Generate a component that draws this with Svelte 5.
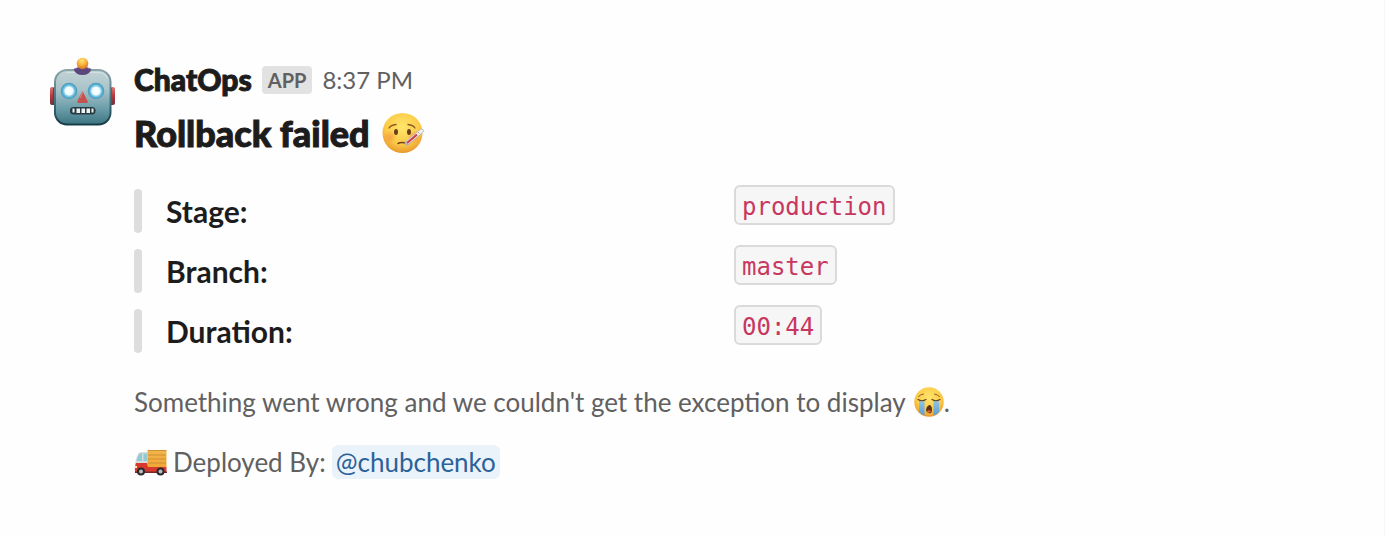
<script>
  const fields = [
    { label: 'Stage:', value: 'production' },
    { label: 'Branch:', value: 'master' },
    { label: 'Duration:', value: '00:44' }
  ];
</script>

<article class="message">
  <svg class="avatar" viewBox="0 0 66 70" role="img" aria-label="ChatOps">
    <defs>
      <linearGradient id="head" x1="0" y1="0" x2="0" y2="1">
        <stop offset="0" stop-color="#c3d3d5" />
        <stop offset=".35" stop-color="#a9c4ca" />
        <stop offset=".7" stop-color="#6c9eaa" />
        <stop offset="1" stop-color="#3d7482" />
      </linearGradient>
      <linearGradient id="rim" x1="0" y1="0" x2="0" y2="1">
        <stop offset="0" stop-color="#8ba5a9" />
        <stop offset=".6" stop-color="#3f6e79" />
        <stop offset="1" stop-color="#163c46" />
      </linearGradient>
      <linearGradient id="ear" x1="0" y1="0" x2="0" y2="1">
        <stop offset="0" stop-color="#db7770" />
        <stop offset=".5" stop-color="#b83840" />
        <stop offset="1" stop-color="#67333b" />
      </linearGradient>
      <radialGradient id="bulb" cx=".45" cy=".25" r=".8">
        <stop offset="0" stop-color="#ffe477" />
        <stop offset=".5" stop-color="#f7af38" />
        <stop offset="1" stop-color="#c96521" />
      </radialGradient>
      <radialGradient id="eye">
        <stop offset="0" stop-color="#fff" />
        <stop offset=".48" stop-color="#edfbff" />
        <stop offset=".62" stop-color="#8fcee5" />
        <stop offset=".82" stop-color="#4caed1" />
        <stop offset="1" stop-color="#5293ac" />
      </radialGradient>
    </defs>
    <rect x="1" y="30" width="8" height="18" rx="2" fill="url(#ear)" />
    <rect x="58" y="30" width="8" height="18" rx="2" fill="url(#ear)" />
    <rect x="4" y="31" width="3" height="16" fill="#70373f" />
    <rect x="60" y="31" width="3" height="16" fill="#70373f" />
    <rect x="6" y="13" width="55.500" height="54.500" rx="12" fill="url(#head)" stroke="url(#rim)" stroke-width="2" />
    <path d="M17 15.500h33q7 0 8 6" fill="none" stroke="#dce8e9" stroke-width="1.2" opacity=".7" />
    <path d="M24.500 12q9-4 18 0-2 6-9 6t-9-6z" fill="#5a477c" />
    <path d="M25.500 12q8-4 16 0" fill="none" stroke="#8b6fa6" />
    <circle cx="33.500" cy="6.500" r="5.800" fill="url(#bulb)" />
    <circle cx="20" cy="34" r="8.300" fill="url(#eye)" />
    <circle cx="47" cy="34" r="8.300" fill="url(#eye)" />
    <path d="M33.500 34l5 10q1 2-1 2h-8q-2 0-1-2z" fill="#c5524e" />
    <path d="M33.500 35l-2 6" stroke="#e28379" />
    <rect x="21" y="50" width="25.500" height="7.500" rx="3.500" fill="#263b42" />
    <path d="M23.500 51.500h2v4h-2zM27.500 51.500h3.500v4.500h-3.500zM32.500 51.500h3.500v4.500h-3.500zM37.500 51.500h3.500v4.500h-3.500zM42.500 51.500h2v4h-2z" fill="#edf3f3" />
  </svg>

  <div class="body">
    <header class="meta">
      <span class="name">ChatOps</span>
      <span class="badge">APP</span>
      <time>8:37 PM</time>
    </header>

    <h1>
      Rollback failed
      <svg class="sick" viewBox="0 0 42 42" role="img" aria-label="face with thermometer">
        <defs>
          <radialGradient id="face" cx=".5" cy=".35" r=".65">
            <stop offset="0" stop-color="#ffe56c" />
            <stop offset=".65" stop-color="#fccb48" />
            <stop offset="1" stop-color="#ea982e" />
          </radialGradient>
          <radialGradient id="flush">
            <stop offset="0" stop-color="#f37a3c" stop-opacity=".5" />
            <stop offset="1" stop-color="#f37a3c" stop-opacity="0" />
          </radialGradient>
        </defs>
        <circle cx="20.500" cy="21" r="20" fill="url(#face)" />
        <circle cx="8" cy="25" r="7" fill="url(#flush)" />
        <circle cx="32" cy="25" r="7" fill="url(#flush)" />
        <path d="M7 16q2-3 7-3.500M26 12.500q5 .5 7 3.500" fill="none" stroke="#8d5820" stroke-width="1.300" stroke-linecap="round" />
        <ellipse cx="14" cy="20" rx="2" ry="3" fill="#65401b" />
        <ellipse cx="27" cy="20" rx="2" ry="3" fill="#65401b" />
        <path d="M16 31.500q4-2 9 .5" fill="none" stroke="#70401c" stroke-width="1.500" stroke-linecap="round" />
        <path d="M25 31L39.500 19" stroke="#b3b0b3" stroke-width="4.600" stroke-linecap="round" />
        <path d="M26 30L39.500 19" stroke="#f4efef" stroke-width="3.400" stroke-linecap="round" />
        <path d="M25 31L35 22.500" stroke="#d73745" stroke-width="2.200" />
        <path d="M30 25l1.500 1.500M33 22.500l1.500 1.500M36 20l1.500 1.500" stroke="#74777c" stroke-width=".6" />
      </svg>
    </h1>

    <dl>
      {#each fields as field}
        <div class="field">
          <dt>{field.label}</dt>
          <dd><code>{field.value}</code></dd>
        </div>
      {/each}
    </dl>

    <p>
      Something went wrong and we couldn't get the exception to display
      <svg class="cry" viewBox="0 0 30 30" role="img" aria-label="loudly crying face">
        <defs>
          <linearGradient id="tear" x1="0" y1="0" x2="0" y2="1">
            <stop offset="0" stop-color="#8fc6e0" />
            <stop offset="1" stop-color="#5b9cd8" />
          </linearGradient>
        </defs>
        <circle cx="15" cy="15" r="14.700" fill="url(#face)" />
        <path d="M5 14h5.500v14.500q-3-1-5.500-3.500zM19.500 14H25v11q-2 2.500-5.500 3.500z" fill="url(#tear)" />
        <path d="M4.500 9.500q2-2 5-2.500M20.500 7q3 .5 5 2.500" fill="none" stroke="#925d22" stroke-linecap="round" />
        <path d="M4 12.500q4 2.500 8 0M18 12.500q4 2.500 8 0" fill="none" stroke="#63401e" stroke-width="1.200" stroke-linecap="round" />
        <path d="M15 18q3 0 3 4.500T15 26t-3-3.500 3-4.500z" fill="#623113" />
        <path d="M13 24q2-1.500 4 0-.5 1.500-2 1.500T13 24z" fill="#e6673d" />
      </svg>.
    </p>

    <p class="deployed">
      <svg class="truck" viewBox="0 0 33 27" role="img" aria-label="delivery truck">
        <defs>
          <linearGradient id="cargo" x1="0" y1="0" x2="0" y2="1">
            <stop offset="0" stop-color="#f0b64c" />
            <stop offset="1" stop-color="#f0a735" />
          </linearGradient>
        </defs>
        <path d="M4 5q1-2 4-2h6v13H1q0-6 3-11z" fill="#d5dddd" />
        <path d="M4.500 6q1-2 3.500-2v8H2.500zM9.500 4.500H13V12H9.500z" fill="#91c9d4" />
        <rect x="13.500" y="1" width="19" height="17" fill="url(#cargo)" />
        <path d="M14 1.500h18.500M14 6h18M14 10h18M14 14h18" stroke="#c98532" stroke-width=".8" />
        <path d="M2 14h11l1 4h18.500v5H1q-1-5 1-9z" fill="#d9382e" />
        <path d="M1 22.500h32v1.500H1z" fill="#7c2526" />
        <path d="M1 17h2v2H1z" fill="#ffe5a6" />
        <circle cx="7" cy="22.500" r="4" fill="#292a2d" />
        <circle cx="26.500" cy="22.500" r="4" fill="#292a2d" />
        <circle cx="7" cy="22.500" r="2" fill="#b8bec1" />
        <circle cx="26.500" cy="22.500" r="2" fill="#b8bec1" />
      </svg>
      <span>Deployed By:</span>
      <a href="#chubchenko">@chubchenko</a>
    </p>
  </div>
</article>

<style>
  :global(body) {
    background: #fefefe;
  }

  :global(*) {
    box-sizing: border-box;
  }

  .message {
    display: flex;
    gap: 19px;
    min-height: 100vh;
    padding: 57px 50px 50px 49px;
    border-right: 1px solid #f5f5f5;
    font-family: Lato, sans-serif;
    color: #1d1c1d;
  }

  .avatar {
    flex: none;
    width: 66px;
    height: 70px;
  }

  .body {
    flex: 1;
    min-width: 0;
    max-width: 1200px;
  }

  .meta {
    display: flex;
    align-items: center;
    gap: 10px;
    height: 45px;
    font-size: 30px;
    line-height: 45px;
  }

  .name,
  h1 {
    font-weight: 900;
    -webkit-text-stroke: 1px currentColor;
    paint-order: stroke fill;
  }

  .badge {
    height: 28px;
    padding: 0 6px;
    border-radius: 4px;
    background: #e2e2e2;
    color: #616061;
    font-size: 20px;
    font-weight: 700;
    line-height: 28px;
  }

  time {
    color: #616061;
    font-size: 24px;
  }

  h1 {
    display: flex;
    align-items: center;
    gap: 12px;
    margin: 9px 0 30px;
    font-size: 36px;
    line-height: 44px;
  }

  svg {
    flex: none;
  }

  .sick {
    width: 42px;
    height: 42px;
  }

  dl {
    display: grid;
    gap: 16px;
    margin: 0;
  }

  .field {
    display: grid;
    grid-template-columns: 1fr 1fr;
    height: 44px;
  }

  dt {
    display: flex;
    align-items: center;
    gap: 24px;
    padding-top: 4px;
    height: 48px;
    font-size: 30px;
    font-weight: 700;
    line-height: 44px;
  }

  dt::before {
    width: 8px;
    height: 44px;
    border-radius: 4px;
    background: #ddd;
    content: '';
  }

  dd {
    margin: 0;
  }

  code {
    display: inline-block;
    height: 40px;
    padding: 2px 6px;
    border: 2px solid #dadada;
    border-radius: 6px;
    background: #f6f6f6;
    color: #c7375f;
    font: 24px/36px 'DejaVu Sans Mono', monospace;
  }

  p {
    display: flex;
    align-items: center;
    margin: 35px 0 24px;
    color: #616061;
    font-size: 26px;
    line-height: 36px;
  }

  .cry {
    width: 30px;
    height: 30px;
    margin-left: 8px;
  }

  .deployed {
    gap: 6px;
    margin: 0;
  }

  .truck {
    width: 33px;
    height: 27px;
  }

  a {
    padding: 0 4px;
    border-radius: 6px;
    background: #ebf3fa;
    color: #2b6299;
    line-height: 34px;
    text-decoration: none;
  }
</style>
